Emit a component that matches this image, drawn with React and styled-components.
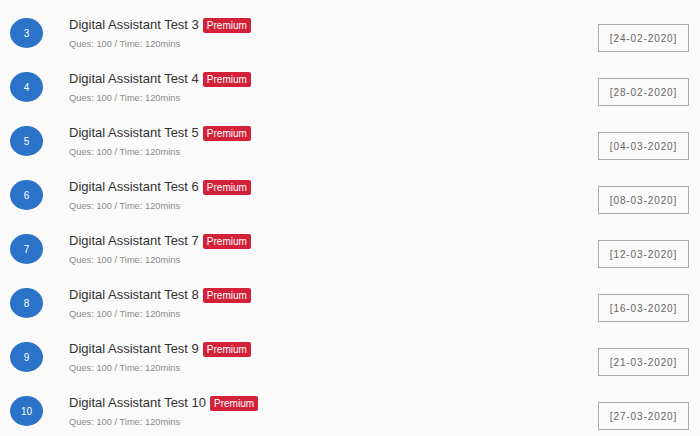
import React from "react";
import styled, { createGlobalStyle } from "styled-components";

const GlobalStyle = createGlobalStyle`
  html, body {
    margin: 0;
    padding: 0;
    background: #fafafa;
  }
  body {
    font-family: "Liberation Sans", Arial, sans-serif;
  }
`;

const List = styled.div`
  display: flex;
  flex-direction: column;
  padding: 6px 11px 0 10px;
`;

const Row = styled.div`
  display: flex;
  align-items: center;
  height: 54px;
`;

const Badge = styled.div`
  width: 33px;
  height: 30px;
  border-radius: 50%;
  background: #2a73c9;
  color: #fff;
  font-size: 10px;
  display: flex;
  align-items: center;
  justify-content: center;
  flex-shrink: 0;
`;

const Info = styled.div`
  display: flex;
  flex-direction: column;
  margin-left: 26px;
  flex: 1;
`;

const TitleLine = styled.div`
  display: flex;
  align-items: center;
  gap: 4px;
`;

const Title = styled.span`
  font-size: 13px;
  color: #333;
  line-height: 16px;
`;

const Premium = styled.span`
  background: #d3213a;
  color: #fff;
  font-size: 10px;
  line-height: 15px;
  padding: 0 4px;
  border-radius: 2px;
`;

const Meta = styled.div`
  margin-top: 6px;
  font-size: 9.3px;
  color: #8a8a8a;
`;

const DateBox = styled.div`
  width: 89px;
  height: 26px;
  margin-top: 10px;
  border: 1px solid #aaa;
  display: flex;
  align-items: center;
  justify-content: center;
  font-size: 10px;
  letter-spacing: 0.9px;
  color: #666;
`;

const tests = [
  { n: 3, date: "24-02-2020" },
  { n: 4, date: "28-02-2020" },
  { n: 5, date: "04-03-2020" },
  { n: 6, date: "08-03-2020" },
  { n: 7, date: "12-03-2020" },
  { n: 8, date: "16-03-2020" },
  { n: 9, date: "21-03-2020" },
  { n: 10, date: "27-03-2020" },
];

export default function App() {
  return (
    <>
      <GlobalStyle />
      <List>
        {tests.map((t) => (
          <Row key={t.n}>
            <Badge>{t.n}</Badge>
            <Info>
              <TitleLine>
                <Title>Digital Assistant Test {t.n}</Title>
                <Premium>Premium</Premium>
              </TitleLine>
              <Meta>Ques: 100 / Time: 120mins</Meta>
            </Info>
            <DateBox>[{t.date}]</DateBox>
          </Row>
        ))}
      </List>
    </>
  );
}
